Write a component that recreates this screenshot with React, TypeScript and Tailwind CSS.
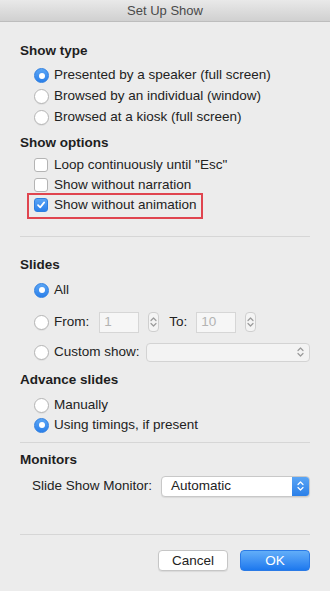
import React from "react";

function Radio({ checked }: { checked?: boolean }) {
  if (checked) {
    return (
      <span className="flex h-[15px] w-[15px] shrink-0 items-center justify-center rounded-full border border-[#2f7fe0] bg-gradient-to-b from-[#5aa5f5] to-[#2a80ea]">
        <span className="h-[6px] w-[6px] rounded-full bg-white" />
      </span>
    );
  }
  return (
    <span className="h-[15px] w-[15px] shrink-0 rounded-full border border-[#b4b4b4] bg-white shadow-[0_1px_0_rgba(0,0,0,0.05)]" />
  );
}

function Checkbox({ checked }: { checked?: boolean }) {
  if (checked) {
    return (
      <span className="flex h-[14px] w-[14px] shrink-0 items-center justify-center rounded-[3px] border border-[#2f7fe0] bg-gradient-to-b from-[#5aa5f5] to-[#2a80ea]">
        <svg width="10" height="10" viewBox="0 0 10 10" fill="none">
          <path d="M2 5.2 L4.2 7.4 L8.2 2.4" stroke="white" strokeWidth="1.7" strokeLinecap="round" strokeLinejoin="round" />
        </svg>
      </span>
    );
  }
  return <span className="h-[14px] w-[14px] shrink-0 rounded-[3px] border border-[#b4b4b4] bg-white" />;
}

function Stepper({ blue }: { blue?: boolean }) {
  return (
    <svg width="7" height="12" viewBox="0 0 7 12" fill="none">
      <path d="M1 4.5 L3.5 2 L6 4.5" stroke={blue ? "white" : "#9a9a9a"} strokeWidth="1.2" strokeLinecap="round" strokeLinejoin="round" />
      <path d="M1 7.5 L3.5 10 L6 7.5" stroke={blue ? "white" : "#9a9a9a"} strokeWidth="1.2" strokeLinecap="round" strokeLinejoin="round" />
    </svg>
  );
}

function SpinBox() {
  return (
    <span className="flex h-[20px] w-[11px] items-center justify-center rounded-[4px] border border-[#cfcfcf] bg-[#f4f4f4]">
      <Stepper />
    </span>
  );
}

function Header({ children, className = "" }: { children: React.ReactNode; className?: string }) {
  return <div className={"flex h-[20px] items-center text-[13.5px] font-bold text-[#1e1e1e] " + className}>{children}</div>;
}

function Row({ children, className = "" }: { children: React.ReactNode; className?: string }) {
  return <div className={"flex items-center gap-[5px] pl-[14px] text-[13.5px] text-[#222] " + className}>{children}</div>;
}

export default function App() {
  return (
    <div
      className="h-[591px] w-[330px] overflow-hidden bg-[#ececec]"
      style={{ fontFamily: '"Liberation Sans", Arial, sans-serif' }}
    >
      {/* Title bar */}
      <div className="h-[22px] border-b border-[#bdbdbd] bg-gradient-to-b from-[#e9e9e9] to-[#d0d0d0] text-center text-[13px] leading-[21px] text-[#4a4a4a]">
        Set Up Show
      </div>

      <div className="px-5">
        <Header className="mt-[19px]">Show type</Header>
        <div className="mt-[4px]">
          <Row className="h-[21px]"><Radio checked />Presented by a speaker (full screen)</Row>
          <Row className="h-[21px]"><Radio />Browsed by an individual (window)</Row>
          <Row className="h-[21px]"><Radio />Browsed at a kiosk (full screen)</Row>
        </div>

        <Header className="mt-[5px]">Show options</Header>
        <div className="mt-[2px]">
          <Row className="h-[20px] gap-[6px]"><Checkbox />Loop continuously until "Esc"</Row>
          <Row className="h-[20px] gap-[6px]"><Checkbox />Show without narration</Row>
          <div className="relative">
            <Row className="h-[20px] gap-[6px]"><Checkbox checked />Show without animation</Row>
            <div className="absolute left-[7px] top-[-2px] h-[26px] w-[176px] border-2 border-[#e0454f]" />
          </div>
        </div>

        <div className="mt-[21px] h-px bg-[#d6d6d6]" />

        <Header className="mt-[18px]">Slides</Header>
        <Row className="mt-[5px] h-[20px]"><Radio checked />All</Row>
        <Row className="mt-[11px] h-[22px]">
          <Radio />
          <span>From:</span>
          <span className="ml-[5px] flex h-[21px] w-[40px] items-center border border-[#d6d6d6] bg-[#f6f6f6] pl-[4px] text-[#b3b3b3]">1</span>
          <span className="ml-[4px]"><SpinBox /></span>
          <span className="ml-[5px]">To:</span>
          <span className="ml-[4px] flex h-[21px] w-[40px] items-center border border-[#d6d6d6] bg-[#f6f6f6] pl-[4px] text-[#b3b3b3]">10</span>
          <span className="ml-[4px]"><SpinBox /></span>
        </Row>
        <Row className="mt-[9px] h-[20px]">
          <Radio />
          <span>Custom show:</span>
          <span className="ml-[1px] flex h-[19px] flex-1 items-center justify-end rounded-[4px] border border-[#d3d3d3] bg-[#f3f3f3] pr-[5px]">
            <Stepper />
          </span>
        </Row>

        <Header className="mt-[8px]">Advance slides</Header>
        <Row className="mt-[5px] h-[20px]"><Radio />Manually</Row>
        <Row className="h-[20px]"><Radio checked />Using timings, if present</Row>

        <div className="mt-[7px] h-px bg-[#d6d6d6]" />

        <Header className="mt-[7px]">Monitors</Header>
        <div className="mt-[5px] flex h-[22px] items-center pl-[12px] text-[13.5px] text-[#222]">
          <span>Slide Show Monitor:</span>
          <span className="ml-auto flex h-[21px] w-[149px] items-stretch overflow-hidden rounded-[4px] border border-[#c8c8c8] bg-white shadow-[0_1px_1px_rgba(0,0,0,0.08)]">
            <span className="flex flex-1 items-center pl-[9px]">Automatic</span>
            <span className="flex w-[17px] items-center justify-center bg-gradient-to-b from-[#5aa5f5] to-[#2a7fe8]">
              <Stepper blue />
            </span>
          </span>
        </div>

        <div className="mt-[37px] h-px bg-[#d6d6d6]" />

        <div className="mt-[15px] flex justify-end gap-[12px]">
          <button className="h-[21px] w-[70px] rounded-[4px] border border-[#c6c6c6] bg-white text-[13.5px] text-[#222] shadow-[0_1px_1px_rgba(0,0,0,0.08)]">
            Cancel
          </button>
          <button className="h-[21px] w-[70px] rounded-[4px] border border-[#2a7ae6] bg-gradient-to-b from-[#62aef8] to-[#1c78ee] text-[13.5px] text-white">
            OK
          </button>
        </div>
      </div>
    </div>
  );
}
